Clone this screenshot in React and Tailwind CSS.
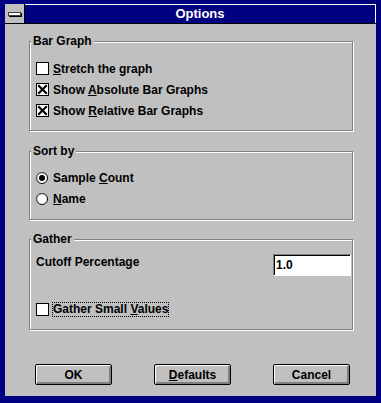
import React from "react";

const font = "font-['Liberation_Sans',Arial,sans-serif] font-bold text-[12px] leading-[14px] text-black";

function Check({ checked }) {
  return (
    <svg width="13" height="13" viewBox="0 0 13 13" className="shrink-0">
      <rect x="0.5" y="0.5" width="12" height="12" fill="#fff" stroke="#000" />
      {checked && (
        <g stroke="#000" strokeWidth="2.2" strokeLinecap="square">
          <line x1="3" y1="3" x2="10" y2="10" />
          <line x1="10" y1="3" x2="3" y2="10" />
        </g>
      )}
    </svg>
  );
}

function Radio({ checked }) {
  return (
    <svg width="12" height="12" viewBox="0 0 12 12" className="shrink-0">
      <circle cx="6" cy="6" r="5.5" fill="#fff" stroke="#000" />
      <path d="M2.2 9.3 A4.6 4.6 0 0 1 9.3 2.2" fill="none" stroke="#808080" />
      {checked && <circle cx="6" cy="6" r="3" fill="#000" />}
    </svg>
  );
}

function Group({ label, className, children }) {
  return (
    <div className={`relative ml-[24px] w-[324px] border border-[#808080] shadow-[inset_1px_1px_0_#fff,1px_1px_0_#fff] ${className}`}>
      <span className="absolute left-[1px] top-[-8px] bg-[#c0c0c0] px-[2px]">{label}</span>
      {children}
    </div>
  );
}

function Row({ children }) {
  return <div className="flex h-[21px] items-center gap-[4px]">{children}</div>;
}

function Button({ children }) {
  return (
    <button
      type="button"
      className="flex h-[21px] w-[77px] items-center justify-center rounded-[2px] border border-black bg-[#c0c0c0] shadow-[inset_1px_1px_0_#fff,inset_-2px_-2px_0_#808080]"
    >
      {children}
    </button>
  );
}

export default function App() {
  return (
    <div className={`flex h-[403px] w-[381px] flex-col bg-[#000080] pb-[7px] pl-[5px] pr-[5px] pt-[4px] ${font}`}>
      <div className="flex h-[20px] border-b border-black">
        <div className="flex w-[20px] items-center justify-center border-r border-black bg-[#c0c0c0] pr-[1px]">
          <div className="h-[4px] w-[13px] border border-[#404040] bg-white shadow-[1px_1px_0_#000]" />
        </div>
        <div className="flex flex-1 items-center justify-center border-r border-t border-white text-[13px] text-white">
          Options
        </div>
      </div>

      <div className="flex flex-1 flex-col bg-[#c0c0c0]">
        <Group label="Bar Graph" className="mt-[17px] h-[90px] pl-[6px] pt-[16px]">
          <Row>
            <Check />
            <span><u>S</u>tretch the graph</span>
          </Row>
          <Row>
            <Check checked />
            <span>Show <u>A</u>bsolute Bar Graphs</span>
          </Row>
          <Row>
            <Check checked />
            <span>Show <u>R</u>elative Bar Graphs</span>
          </Row>
        </Group>

        <Group label="Sort by" className="mt-[20px] h-[69px] pl-[6px] pt-[15px]">
          <Row>
            <Radio checked />
            <span className="ml-[1px]">Sample <u>C</u>ount</span>
          </Row>
          <Row>
            <Radio />
            <span className="ml-[1px]"><u>N</u>ame</span>
          </Row>
        </Group>

        <Group label="Gather" className="mt-[19px] h-[91px] pl-[6px] pt-[14px]">
          <div className="flex items-start justify-between pr-[1px]">
            <span className="mt-[1px]">Cutoff Percentage</span>
            <div className="flex h-[22px] w-[78px] items-center border border-b-white border-l-[#808080] border-r-white border-t-[#808080] bg-white pl-[2px] shadow-[inset_1px_1px_0_#000]">
              1.0
            </div>
          </div>
          <div className="mt-[23px] flex h-[21px] items-center gap-[3px]">
            <Check />
            <span className="border border-dotted border-black leading-[13px]">
              Gather Small <u>V</u>alues
            </span>
          </div>
        </Group>

        <div className="ml-[30px] mt-[34px] flex gap-[42px]">
          <Button>OK</Button>
          <Button><span><u>D</u>efaults</span></Button>
          <Button>Cancel</Button>
        </div>
      </div>
    </div>
  );
}
